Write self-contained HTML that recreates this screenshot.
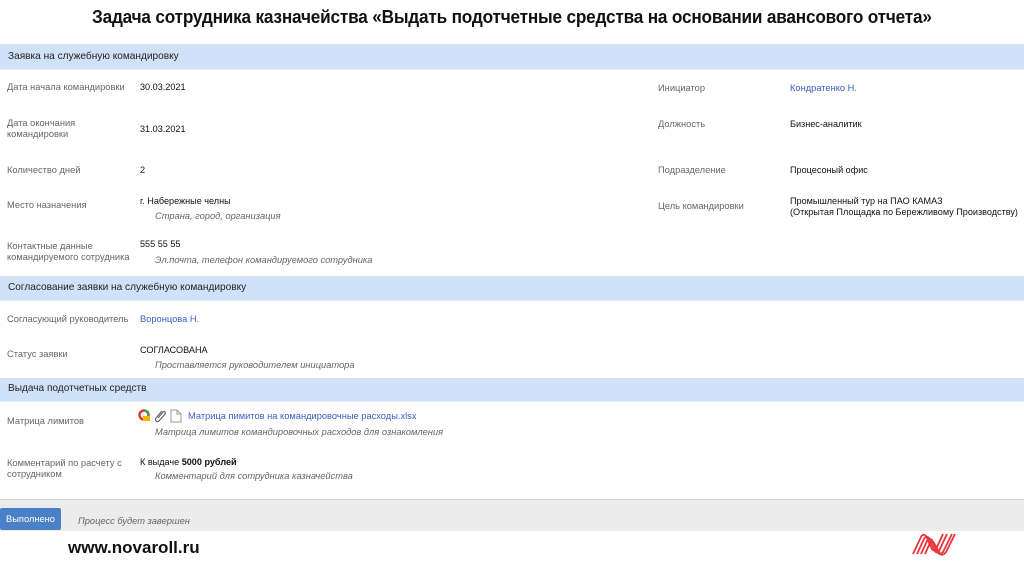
<!DOCTYPE html>
<html><head><meta charset="utf-8"><style>
*{margin:0;padding:0;box-sizing:border-box}
body{width:1024px;height:574px;background:#fff;position:relative;overflow:hidden;font-family:"Liberation Sans","Noto Sans CJK SC",sans-serif;font-size:9px;color:#222}
.a{position:absolute;white-space:nowrap}
.bar{position:absolute;left:0;width:1024px;background:#cfe2f7;border-bottom:1px solid #e6eef8}
.bar span{position:absolute;left:8px;top:7px;font-size:10.1px;color:#222}
.l{color:#666;font-size:9.3px;line-height:11px}
.v{color:#111;font-size:9.1px}
.lk{color:#3b5fc0;font-size:9.3px}
.h{color:#666;font-style:italic;font-size:9.3px}
</style></head><body>
<div class="a" style="left:92px;top:7px;font-size:18px;font-weight:bold;color:#111;transform:scaleX(0.955);transform-origin:left top;letter-spacing:-0.2px">Задача сотрудника казначейства «Выдать подотчетные средства на основании авансового отчета»</div>

<div class="bar" style="top:44px;height:26px"><span>Заявка на служебную командировку</span></div>
<div class="a l" style="left:7px;top:82px">Дата начала командировки</div>
<div class="a v" style="left:140px;top:82px">30.03.2021</div>
<div class="a l" style="left:7px;top:118px">Дата окончания<br>командировки</div>
<div class="a v" style="left:140px;top:124px">31.03.2021</div>
<div class="a l" style="left:7px;top:165px">Количество дней</div>
<div class="a v" style="left:140px;top:165px">2</div>
<div class="a l" style="left:7px;top:200px">Место назначения</div>
<div class="a v" style="left:140px;top:196px">г. Набережные челны</div>
<div class="a h" style="left:155px;top:211px">Страна, город, организация</div>
<div class="a l" style="left:7px;top:241px">Контактные данные<br>командируемого сотрудника</div>
<div class="a v" style="left:140px;top:239px">555 55 55</div>
<div class="a h" style="left:155px;top:255px">Эл.почта, телефон командируемого сотрудника</div>

<div class="a l" style="left:658px;top:83px">Инициатор</div>
<div class="a lk" style="left:790px;top:83px">Кондратенко Н.</div>
<div class="a l" style="left:658px;top:119px">Должность</div>
<div class="a v" style="left:790px;top:119px">Бизнес-аналитик</div>
<div class="a l" style="left:658px;top:165px">Подразделение</div>
<div class="a v" style="left:790px;top:165px">Процесоный офис</div>
<div class="a l" style="left:658px;top:201px">Цель командировки</div>
<div class="a v" style="left:790px;top:196px;line-height:11px">Промышленный тур на ПАО КАМАЗ<br>(Открытая Площадка по Бережливому Производству)</div>

<div class="bar" style="top:276px;height:25px"><span style="top:6px">Согласование заявки на служебную командировку</span></div>
<div class="a l" style="left:7px;top:314px">Согласующий руководитель</div>
<div class="a lk" style="left:140px;top:314px">Воронцова Н.</div>
<div class="a l" style="left:7px;top:349px">Статус заявки</div>
<div class="a v" style="left:140px;top:345px">СОГЛАСОВАНА</div>
<div class="a h" style="left:155px;top:360px">Проставляется руководителем инициатора</div>

<div class="bar" style="top:378px;height:24px"><span style="top:5px">Выдача подотчетных средств</span></div>
<div class="a l" style="left:7px;top:416px">Матрица лимитов</div>
<svg class="a" style="left:138px;top:409px" width="48" height="14" viewBox="0 0 48 14">
<circle cx="6" cy="6" r="4.5" fill="none" stroke="#e53935" stroke-width="2.5"/>
<path d="M6 1.5 A4.5 4.5 0 0 1 10.5 6" fill="none" stroke="#43a047" stroke-width="2.5"/>
<rect x="5" y="7" width="7" height="5" fill="#f4b400"/>
<path d="M24 2 L18 9 a2 2 0 0 0 3 3 L27 5 a1.3 1.3 0 0 0 -2 -2 L20 9" fill="none" stroke="#666" stroke-width="1.2"/>
<path d="M33 1 H39 L43 5 V13 H33 Z M39 1 V5 H43" fill="#fff" stroke="#999" stroke-width="1"/>
</svg>
<div class="a lk" style="left:188px;top:411px">Матрица пимитов на командировочные расходы.xlsx</div>
<div class="a h" style="left:155px;top:427px">Матрица лимитов командировочных расходов для ознакомления</div>
<div class="a l" style="left:7px;top:458px">Комментарий по расчету с<br>сотрудником</div>
<div class="a v" style="left:140px;top:457px">К выдаче <b>5000 рублей</b></div>
<div class="a h" style="left:155px;top:471px">Комментарий для сотрудника казначейства</div>

<div class="a" style="left:0;top:499px;width:1024px;height:32px;background:#ececec;border-top:1px solid #d6d6d6"></div>
<div class="a" style="left:0;top:508px;width:61px;height:22px;background:#4a80c8;border-radius:2px;color:#fff;font-size:9.3px;line-height:22px;text-align:center">Выполнено</div>
<div class="a h" style="left:78px;top:516px">Процесс будет завершен</div>

<div class="a" style="left:68px;top:538px;font-size:17px;font-weight:bold;color:#111">www.novaroll.ru</div>
<svg class="a" style="left:912px;top:532px" width="46" height="24" viewBox="0 0 46 24">
<g fill="none" stroke="#e8353a" stroke-width="1.8">
<path d="M1 22 L9 5 Q11 1 14 4 L20 17 Q22 20 24 17 L31 2"/>
<path d="M5 22 L12 7 Q14 3 17 6 L23 19 Q25 22 27 19 L35 2"/>
<path d="M9 22 L15 9 Q17 5 20 8 L26 21 Q28 23 31 20 L40 2"/>
<path d="M13 22 L18 11 Q20 8 22 11 L28 22 Q31 24 34 20 L43 2"/>
</g></svg>
</body></html>
